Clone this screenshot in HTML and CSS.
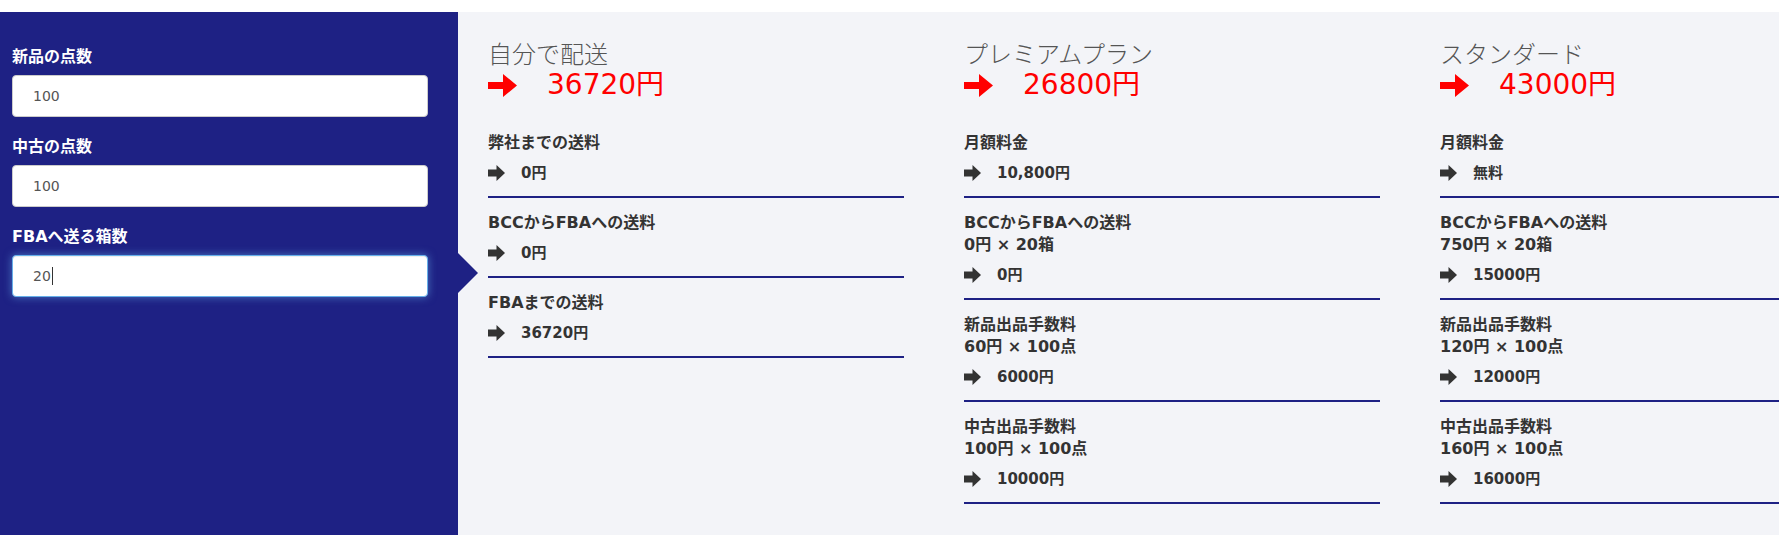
FILE: index.html
```html
<!DOCTYPE html>
<html lang="ja">
<head>
<meta charset="utf-8">
<title>送料シミュレーション</title>
<link rel="stylesheet" href="styles.css">
</head>
<body>
<div class="page">
  <div class="calc">
    <aside class="sidebar">
      <div class="field">
        <label class="field-label">新品の点数</label>
        <input class="field-input" type="text" value="100">
      </div>
      <div class="field">
        <label class="field-label">中古の点数</label>
        <input class="field-input" type="text" value="100">
      </div>
      <div class="field">
        <label class="field-label">FBAへ送る箱数</label>
        <div class="field-input is-focused"><span>20</span><span class="caret"></span></div>
      </div>
      <span class="notch"></span>
    </aside>

    <main class="results">
      <section class="plan">
        <h2 class="plan-title">自分で配送</h2>
        <div class="plan-total">
          <svg class="arrow-big" viewBox="0 0 29 23"><path d="M0 8h15V0l14 11.5L15 23v-8H0z"/></svg>
          <span>36720円</span>
        </div>
        <div class="item">
          <div class="item-label">弊社までの送料</div>
          <div class="item-value"><svg class="arrow" viewBox="0 0 17 16"><path d="M0 4.5h8.5V0L17 8l-8.5 8v-4.5H0z"/></svg><span>0円</span></div>
        </div>
        <div class="item">
          <div class="item-label">BCCからFBAへの送料</div>
          <div class="item-value"><svg class="arrow" viewBox="0 0 17 16"><path d="M0 4.5h8.5V0L17 8l-8.5 8v-4.5H0z"/></svg><span>0円</span></div>
        </div>
        <div class="item">
          <div class="item-label">FBAまでの送料</div>
          <div class="item-value"><svg class="arrow" viewBox="0 0 17 16"><path d="M0 4.5h8.5V0L17 8l-8.5 8v-4.5H0z"/></svg><span>36720円</span></div>
        </div>
      </section>

      <section class="plan">
        <h2 class="plan-title">プレミアムプラン</h2>
        <div class="plan-total">
          <svg class="arrow-big" viewBox="0 0 29 23"><path d="M0 8h15V0l14 11.5L15 23v-8H0z"/></svg>
          <span>26800円</span>
        </div>
        <div class="item">
          <div class="item-label">月額料金</div>
          <div class="item-value"><svg class="arrow" viewBox="0 0 17 16"><path d="M0 4.5h8.5V0L17 8l-8.5 8v-4.5H0z"/></svg><span>10,800円</span></div>
        </div>
        <div class="item">
          <div class="item-label">BCCからFBAへの送料</div>
          <div class="item-label">0円 × 20箱</div>
          <div class="item-value"><svg class="arrow" viewBox="0 0 17 16"><path d="M0 4.5h8.5V0L17 8l-8.5 8v-4.5H0z"/></svg><span>0円</span></div>
        </div>
        <div class="item">
          <div class="item-label">新品出品手数料</div>
          <div class="item-label">60円 × 100点</div>
          <div class="item-value"><svg class="arrow" viewBox="0 0 17 16"><path d="M0 4.5h8.5V0L17 8l-8.5 8v-4.5H0z"/></svg><span>6000円</span></div>
        </div>
        <div class="item">
          <div class="item-label">中古出品手数料</div>
          <div class="item-label">100円 × 100点</div>
          <div class="item-value"><svg class="arrow" viewBox="0 0 17 16"><path d="M0 4.5h8.5V0L17 8l-8.5 8v-4.5H0z"/></svg><span>10000円</span></div>
        </div>
      </section>

      <section class="plan">
        <h2 class="plan-title">スタンダード</h2>
        <div class="plan-total">
          <svg class="arrow-big" viewBox="0 0 29 23"><path d="M0 8h15V0l14 11.5L15 23v-8H0z"/></svg>
          <span>43000円</span>
        </div>
        <div class="item">
          <div class="item-label">月額料金</div>
          <div class="item-value"><svg class="arrow" viewBox="0 0 17 16"><path d="M0 4.5h8.5V0L17 8l-8.5 8v-4.5H0z"/></svg><span>無料</span></div>
        </div>
        <div class="item">
          <div class="item-label">BCCからFBAへの送料</div>
          <div class="item-label">750円 × 20箱</div>
          <div class="item-value"><svg class="arrow" viewBox="0 0 17 16"><path d="M0 4.5h8.5V0L17 8l-8.5 8v-4.5H0z"/></svg><span>15000円</span></div>
        </div>
        <div class="item">
          <div class="item-label">新品出品手数料</div>
          <div class="item-label">120円 × 100点</div>
          <div class="item-value"><svg class="arrow" viewBox="0 0 17 16"><path d="M0 4.5h8.5V0L17 8l-8.5 8v-4.5H0z"/></svg><span>12000円</span></div>
        </div>
        <div class="item">
          <div class="item-label">中古出品手数料</div>
          <div class="item-label">160円 × 100点</div>
          <div class="item-value"><svg class="arrow" viewBox="0 0 17 16"><path d="M0 4.5h8.5V0L17 8l-8.5 8v-4.5H0z"/></svg><span>16000円</span></div>
        </div>
      </section>
    </main>
  </div>
</div>
</body>
</html>
```

FILE: styles.css
```css
* { box-sizing: border-box; }

html, body {
  margin: 0;
  padding: 0;
  background: #ffffff;
}

body {
  font-family: "DejaVu Sans", "Noto Sans CJK JP", sans-serif;
  color: #333333;
  overflow: hidden;
}

.page {
  padding-top: 12px;
}

.calc {
  display: flex;
  min-height: 523px;
}

.sidebar {
  position: relative;
  flex: 0 0 458px;
  background: #1e2184;
  padding: 34px 30px 0 12px;
  display: flex;
  flex-direction: column;
  gap: 19px;
}

.field {
  display: flex;
  flex-direction: column;
  gap: 7px;
}

.field-label {
  color: #ffffff;
  font-weight: bold;
  font-size: 16px;
  line-height: 22px;
}

.field-input {
  display: flex;
  align-items: center;
  width: 416px;
  height: 42px;
  padding: 0 20px;
  background: #ffffff;
  border: 1px solid #cccccc;
  border-radius: 4px;
  font-family: "DejaVu Sans", sans-serif;
  font-size: 14px;
  color: #555555;
  outline: none;
}

.field-input.is-focused {
  border-color: #66afe9;
  box-shadow: inset 0 1px 1px rgba(0,0,0,.075), 0 0 8px rgba(102,175,233,.6);
}

.caret {
  display: inline-block;
  width: 1px;
  height: 18px;
  background: #333333;
  margin-left: 1px;
}

.notch {
  position: absolute;
  right: -20px;
  top: 241px;
  width: 0;
  height: 0;
  border-top: 20px solid transparent;
  border-bottom: 20px solid transparent;
  border-left: 20px solid #1e2184;
}

.results {
  flex: 1;
  min-width: 0;
  background: #f3f4f8;
  padding: 25px 0 0 30px;
  display: flex;
  gap: 60px;
  overflow: hidden;
}

.plan {
  flex: 0 0 416px;
}

.plan-title {
  margin: 0;
  font-family: "Noto Sans CJK JP", sans-serif;
  font-size: 24px;
  font-weight: 300;
  line-height: 32px;
  color: #555555;
}

.plan-total {
  display: flex;
  align-items: center;
  gap: 30px;
  color: #ff0000;
  font-size: 28px;
  line-height: 32px;
  margin-bottom: 17px;
}

.arrow-big {
  width: 29px;
  height: 23px;
  fill: #ff0000;
  flex: none;
}

.item {
  padding: 14px 0 12px;
  border-bottom: 2px solid #1e2184;
}

.item-label {
  font-size: 16px;
  line-height: 22px;
  font-weight: bold;
  color: #333333;
  white-space: nowrap;
}

.item-value {
  display: flex;
  align-items: center;
  gap: 16px;
  margin-top: 8px;
  font-size: 15px;
  line-height: 22px;
  font-weight: bold;
  color: #333333;
}

.arrow {
  width: 17px;
  height: 16px;
  fill: #333333;
  flex: none;
}
```
